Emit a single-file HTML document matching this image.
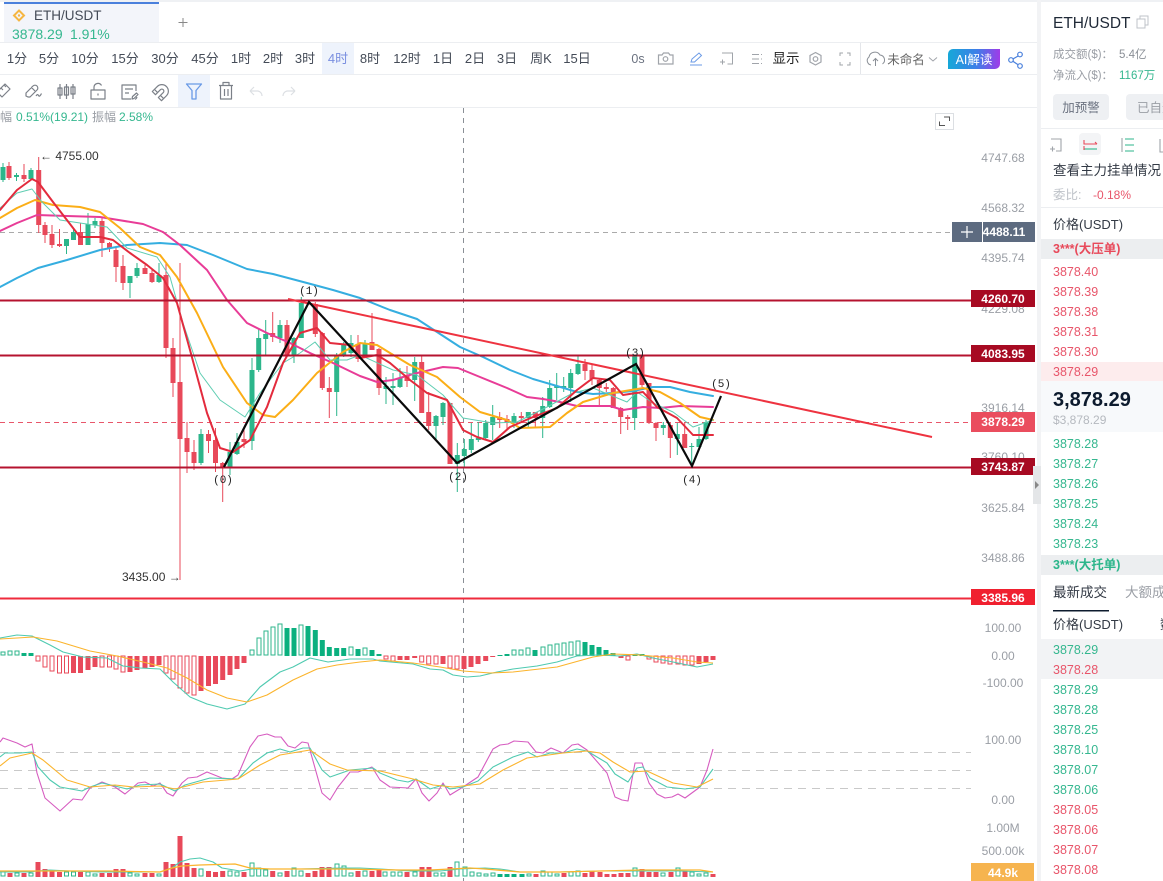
<!DOCTYPE html>
<html><head><meta charset="utf-8"><title>ETH/USDT</title>
<style>
html,body{margin:0;padding:0;background:#fff;width:1163px;height:881px;overflow:hidden}
svg{display:block}
text{font-family:"Liberation Sans","Noto Sans CJK SC",sans-serif}
.ax{font-size:12px;fill:#9a9ea5;text-anchor:middle}
.tb{font-size:13px;fill:#444b57;text-anchor:middle}
.tag{font-size:12px;fill:#fff;text-anchor:middle;font-weight:bold}
.r{font-size:12.5px;fill:#e8556a}
.g{font-size:12.5px;fill:#35b78f}
.wv{font-family:"Liberation Mono",monospace;font-size:11px;fill:#222;text-anchor:middle}
.ic{fill:none;stroke:#7b8088;stroke-width:1.2}
</style></head><body>
<svg width="1163" height="881" viewBox="0 0 1163 881" xmlns="http://www.w3.org/2000/svg">
<rect width="1163" height="881" fill="#fff"/>
<rect width="1163" height="2" fill="#eff1f4"/>
<!-- tab -->
<rect x="4" y="2" width="155" height="41" fill="#f3f5fa"/>
<rect x="4" y="2" width="155" height="2" fill="#4a80dc"/>
<path d="M19 10.500L24 15.500L19 20.500L14 15.500Z" fill="none" stroke="#f5b642" stroke-width="2"/>
<circle cx="19" cy="15.500" r="1.200" fill="#f5b642"/>
<text x="34" y="20" font-size="13.500" fill="#444b57">ETH/USDT</text>
<text x="12" y="39" font-size="14" fill="#35b78f">3878.29</text>
<text x="70" y="39" font-size="14" fill="#35b78f">1.91%</text>
<path d="M183 18v9M178.500 22.500h9" stroke="#888" stroke-width="1"/>
<path d="M0 42.500H1037M0 74.500H1037M0 107.500H1037" stroke="#eceef1" stroke-width="1"/>
<!-- time bar -->
<rect x="322" y="43" width="32" height="31" fill="#eef3fc"/>
<g>
<text class="tb" x="17" y="63">1分</text><text class="tb" x="49" y="63">5分</text><text class="tb" x="85" y="63">10分</text><text class="tb" x="125" y="63">15分</text><text class="tb" x="165" y="63">30分</text><text class="tb" x="205" y="63">45分</text><text class="tb" x="241" y="63">1时</text><text class="tb" x="273" y="63">2时</text><text class="tb" x="305" y="63">3时</text><text class="tb" x="338" y="63" style="fill:#7a8fe0">4时</text><text class="tb" x="370" y="63">8时</text><text class="tb" x="407" y="63">12时</text><text class="tb" x="443" y="63">1日</text><text class="tb" x="475" y="63">2日</text><text class="tb" x="507" y="63">3日</text><text class="tb" x="541" y="63">周K</text><text class="tb" x="577" y="63">15日</text>
<text class="tb" x="638" y="63" style="fill:#6b7280;font-size:12.500px">0s</text>
<text class="tb" x="786" y="63" style="fill:#222;font-size:13.500px">显示</text>
<text class="tb" x="906" y="64" style="fill:#666;font-size:12.500px">未命名</text>
</g>
<!-- top right icons -->
<g class="ic" stroke-width="1">
<path d="M658.500 55h3.500l1.500-2h5l1.500 2h3v9h-14.500z" stroke="#a0a4aa"/><circle cx="665.500" cy="59" r="2.300" stroke="#a0a4aa"/>
<path d="M691 62l1-3 7-6 2.500 2.500-7 6.500zM690 65h12" stroke="#6a9ae6" stroke-width="1"/>
<path d="M722 53h10.500v11h-5M725 62h-5M722.500 59.500v5" stroke="#a0a4aa" stroke-width="1"/>
<path d="M752 54.500h7M752 59h7M752 63.500h7M761 54.500h1M761 59h1M761 63.500h1" stroke="#a0a4aa" stroke-width="1"/>
<path d="M815.500 52.500l5.500 3v6.500l-5.500 3-5.500-3v-6.500z" stroke="#a0a4aa"/><circle cx="815.500" cy="59" r="2.300" stroke="#a0a4aa"/>
<path d="M840 56v-3h3M847 53h3v3M850 62v3h-3M843 65h-3v-3" stroke="#a0a4aa" stroke-width="1"/>
<path d="M871 65a4.500 4.500 0 0 1-2-8 6 6 0 0 1 11-2 5 5 0 0 1 2.500 9M875.500 66v-7M873 61l2.500-2.500 2.500 2.500" stroke="#8a8f96" stroke-width="1"/>
<path d="M929 57.500l4 3.500 4-3.500" stroke="#a0a4aa" stroke-width="1"/>
<path d="M1011 60l9-5M1011 60l9 6" stroke="#4a80dc"/><circle cx="1011" cy="60" r="2.300" stroke="#4a80dc" fill="#fff"/><circle cx="1020" cy="54.500" r="2.300" stroke="#4a80dc" fill="#fff"/><circle cx="1020" cy="66" r="2.300" stroke="#4a80dc" fill="#fff"/>
</g>
<path d="M860.500 43V74" stroke="#e4e6ea"/>
<defs><linearGradient id="ai" x1="0" x2="1"><stop offset="0" stop-color="#16a8d8"/><stop offset=".55" stop-color="#3d7fe8"/><stop offset="1" stop-color="#a03be8"/></linearGradient></defs>
<path d="M953 49h47v15a5 5 0 0 1-5 5h-47v-15a5 5 0 0 1 5-5z" fill="url(#ai)"/>
<text x="974" y="64" font-size="12.500" fill="#fff" text-anchor="middle">AI解读</text>
<!-- drawing tools -->
<rect x="178" y="75" width="32" height="32" fill="#eef3fc"/>
<g class="ic" stroke-linejoin="round">
<path d="M-3 92l8-8 5 5-8 8zM1 88l2 2M4 85l2 2" />
<path d="M28 97l-2-1 0-3 7-7a2.500 2.500 0 0 1 4 4l-7 7zM31 87l4 4M36 96q1.500-2.500 2.500-.5t3-2"/>
<path d="M60 84v15M66.500 84v15M73 84v15M58 88h4v7h-4zM64.500 87h4v8h-4zM71 87h4v7h-4z"/>
<path d="M91 90h14v9h-14zM94 90v-3a4 4 0 0 1 7.500-1.500M98 93.500v2"/>
<path d="M131 99h-9v-14h14v6M125 89h8M125 93h4M132 99l.5-2.500 4-3.500 1.500 1.500-4 4zM137 97q-1 2.500-2 2"/>
<g transform="rotate(45 161.500 91.500)"><path d="M155 98v-7a6.500 6.500 0 0 1 13 0v7h-4.500v-7a2 2 0 0 0-4 0v7zM155 95h4.500M163.500 95h4.500"/></g>
<path d="M186.500 84h15l-5.500 6.500v8.500h-4v-8.500z" stroke="#6a9ae6" stroke-width="1.300"/>
<path d="M219 85.500h14M223 85.500v-3h6v3M220.500 85.500v13.500h11v-13.500M224.500 89v7M228 89v7"/>
<path d="M250 91h8a5 5 0 0 1 4 5M250 91l4-4M250 91l4 4" stroke="#dcdfe3"/>
<path d="M295 91h-8a5 5 0 0 0-4 5M295 91l-4-4M295 91l-4 4" stroke="#dcdfe3"/>
</g>
<!-- stats -->
<text x="0" y="121" font-size="12" fill="#9a9ea5">幅</text>
<text x="16" y="121" font-size="12" fill="#35b78f">0.51%(19.21)</text>
<text x="92" y="121" font-size="12" fill="#9a9ea5">振幅</text>
<text x="119" y="121" font-size="12" fill="#35b78f">2.58%</text>
<!-- expand button -->
<rect x="935.500" y="113.500" width="18" height="16" fill="#fff" stroke="#dcdfe3"/>
<path d="M944 117h5.500v4M945 125.500h-5.500v-4" fill="none" stroke="#555"/>
<!-- dashed -->
<path d="M463.500 108V881" stroke="#8a8f96" stroke-dasharray="5 5"/>
<path d="M0 232.500H952" stroke="#aaa" stroke-dasharray="5 4"/>
<path d="M0 422.500H971" stroke="#e8566a" stroke-dasharray="5 4"/>
<!-- candles wicks -->
<path fill="none" stroke="#e8495a" stroke-width="1" d="M9 162V180M24 164V182M38.700 157V233M45 222V243M52 225V248M59.500 229V247M80.500 223V245M102 218V257M109.500 242V252M116 247V282M123 255V290M145 265V274M152 270V283M166 263V358M173 338V397M180 263V580M187 422V473M194 440V470M208.500 430V453M215.500 428V472M222.700 462V502M244 428V448M272.700 312V342M287 320V357M315.300 302V337M322.300 332V390M329.300 377V418M358 335V362M372 313V350M379 348V395M407 366V387M421.700 355V413M428.700 392V430M450 403V464M499.700 412V428M507 415V430M521.300 412V423M535.300 412V427M585 359V380M592 365V385M599.300 378V406M606.300 383V392M613.300 387V408M620.700 407V434M627.700 415V430M642 355V387M649 383V424M656 422V441M670.300 423V458M684.700 423V448"/>
<path fill="none" stroke="#2cb68b" stroke-width="1" d="M3 163V182M16.500 173V181M31 168V180M66.500 239V254M73.500 228V240M88 213V245M95 218V228M130 276V298M137 263V278M159 263V283M201 429V465M230 442V475M237 433V455M252 358V450M258.700 328V372M265.700 320V355M280 320V343M294 337V363M301.300 297V338M336.700 353V416M343.700 342V357M351 335V357M365 340V358M386 377V404M393 373V405M400 368V388M414.700 357V401M436 415V439M443 402V425M457.300 443V492M464.300 439V467M471.300 423V453M478.300 422V442M485.700 420V440M492.700 405V440M514 413V428M528.300 412V428M542.700 397V438M549.700 380V408M556.700 373V400M563.700 377V392M570.700 369V402M578 355V375M634.700 355V430M663.300 422V435M677.300 423V455M691.700 443V468M699 427V447M706 420V440"/>
<!-- bodies -->
<path fill="none" stroke="#e8495a" stroke-width="5" d="M9 166V178M24 175V179M38.700 170V225M45 225V235M52 234V245M59.500 244V246M80.500 232V245M102 221V243M109.500 243V248M116 250V267M123 266V283M145 268V274M152 273V282M166 275V348M173 348V383M180 382V439M187 438V452M194 452V463M208.500 434V441M215.500 440V463M222.700 463V467M244 439V442M272.700 333V337M287 325V355M315.300 304V334M322.300 333V388M329.300 388V392M358 344V359M372 342V350M379 349V388M407 376V381M421.700 362V413M428.700 412V426M450 403V464M499.700 417V420M507 419V422M521.300 416V418M535.300 412V418M585 364V371M592 370V379M599.300 380V388M606.300 387V389M613.300 388V408M620.700 408V417M627.700 417V419M642 356V385M649 383V423M656 423V428M670.300 425V438M684.700 434V448"/>
<path fill="none" stroke="#2cb68b" stroke-width="5" d="M3 167V180M16.500 175V177M31 170V179M66.500 239V246M73.500 232V240M88 224V245M95 221V225M130 276V283M137 268V276M159 275V282M201 434V463M230 452V467M237 442V454M252 370V441M258.700 338V370M265.700 334V339M280 325V338M294 338V356M301.300 303V338M336.700 355V392M343.700 344V355M351 343V353M365 343V355M386 386V389M393 386V388M400 378V387M414.700 362V380M436 416V426M443 403V417M457.300 455V464M464.300 449V456M471.300 439V450M478.300 438V440M485.700 423V438M492.700 417V425M514 416V423M528.300 412V418M542.700 406V418M549.700 388V407M556.700 386V388M563.700 386V388M570.700 373V388M578 364V374M634.700 356V418M663.300 425V428M677.300 434V439M691.700 446V447M699 439V447M706 422V439"/>
<!-- MAs -->
<g fill="none" stroke-linejoin="round" stroke-linecap="round">
<polyline stroke="#35aee0" stroke-width="2" points="0,287 17,278 38,268 67,260 100,250 127,245 160,243 187,245 213,255 247,269 273,274 307,283 333,290 360,298 390,310 417,319 437,332 460,347 483,357 510,370 533,379 557,386 577,392 593,394 613,393 633,391 653,387 670,387 690,392 713,396"/>
<polyline stroke="#e83c97" stroke-width="2" points="0,231 17,223 37,215 67,216 100,217 143,224 163,232 180,245 207,270 227,300 247,323 267,333 290,343 310,353 333,363 360,376 377,382 393,380 413,374 443,367 458,368 480,377 507,388 527,397 543,399 560,402 577,406 610,406 623,410 643,407 660,408 680,406 713,407"/>
<polyline stroke="#fbae17" stroke-width="2" points="0,218 17,208 35,200 53,205 80,207 100,212 120,228 140,247 160,255 177,277 197,313 223,367 247,403 263,415 275,417 293,400 317,373 343,352 360,343 377,345 390,353 410,365 437,377 460,397 480,412 507,420 520,428 550,427 567,413 583,402 613,393 643,388 660,392 680,403 700,417 713,420"/>
<polyline stroke="#5fcdb2" stroke-width="1" points="0,208 17,193 32,189 42,202 60,220 80,223 107,227 127,248 157,257 170,277 183,323 200,373 220,400 245,417 260,393 283,363 300,353 315,342 330,360 347,360 360,355 393,370 417,375 443,395 463,418 493,423 517,422 547,407 573,393 593,388 627,402 637,392 653,403 673,412 693,427 713,420"/>
<polyline stroke="#e32b3d" stroke-width="2" points="0,210 17,190 32,179 38,182 53,202 80,237 100,237 113,240 130,253 147,265 163,278 177,303 190,350 207,413 220,448 233,452 250,440 267,407 283,363 300,333 317,328 330,343 350,345 360,358 377,355 390,363 410,380 427,393 447,400 463,430 477,437 493,442 510,427 533,417 557,408 577,390 593,378 610,380 623,395 643,392 657,407 677,418 693,435 713,435"/>
</g>
<!-- horizontal levels -->
<path d="M0 300.500H971M0 355.500H971M0 467.500H971" stroke="#b5132f" stroke-width="2"/>
<path d="M0 598.500H971" stroke="#ef2b3c" stroke-width="2"/>
<path d="M288 299L932 437" stroke="#ee3340" stroke-width="2"/>
<polyline fill="none" stroke="#0a0a0a" stroke-width="2.200" stroke-linejoin="miter" points="224,467 309,302 457,463 636,364 692,466 721,396"/>
<text class="wv" x="223" y="483">(0)</text><text class="wv" x="309" y="294">(1)</text><text class="wv" x="458" y="480">(2)</text><text class="wv" x="635" y="356">(3)</text><text class="wv" x="692" y="483">(4)</text><text class="wv" x="721" y="387">(5)</text>
<text x="40" y="160" font-size="12" fill="#333">← 4755.00</text>
<text x="122" y="581" font-size="12" fill="#333">3435.00 →</text>
<!-- MACD -->
<path fill="#fff" stroke="#2cb68b" stroke-width="1" d="M1 655v-3h4v3zM8 655v-4h4v4zM15 655v-4h4v4zM250 655v-5h4v5zM257 655v-17h4v17zM264 655v-24h4v24zM271 655v-28h4v28zM278 655v-31h4v31zM299 655v-30h4v30zM349 655v-8h4v8zM363 655v-7h4v7zM512 655v-5h4v5zM519 655v-5h4v5zM526 655v-7h4v7zM541 655v-8h4v8zM548 655v-10h4v10zM555 655v-11h4v11zM562 655v-12h4v12zM569 655v-13h4v13zM576 655v-14h4v14z"/>
<path fill="none" stroke="#0bb07f" stroke-width="5" d="M24 656V653M31 656V653M287 656V628M294 656V628M308 656V626M315.300 656V630M322.300 656V640M329.300 656V647M336.700 656V648M343.700 656V648M358 656V649M372 656V650M379 656V654M500 656V655M507 656V654M535 656V650M585 656V642M592 656V645M599 656V647M606 656V650M613 656V653M635 656V654M642 656V654"/>
<path fill="#fff" stroke="#e8495a" stroke-width="1" d="M36 656v5h4v-5zM43 656v11h4v-11zM50 656v15h4v-15zM57.500 656v17h4v-17zM64.500 656v17h4v-17zM100 656v11h4v-11zM107.500 656v11h4v-11zM114 656v13h4v-13zM121 656v16h4v-16zM164 656v17h4v-17zM171 656v23h4v-23zM178 656v32h4v-32zM185 656v37h4v-37zM192 656v39h4v-39zM384 656v3h4v-3zM391 656v5h4v-5zM419.700 656v6h4v-6zM426.700 656v8h4v-8zM434 656v8h4v-8zM448 656v12h4v-12zM455 656v13h4v-13zM626 656v4h4v-4zM647 656v3h4v-3zM654 656v6h4v-6zM661 656v7h4v-7zM668 656v8h4v-8zM676 656v8h4v-8zM683 656v9h4v-9zM690 656v9h4v-9z"/>
<path fill="none" stroke="#e8495a" stroke-width="5" d="M73.500 656V673M80.500 656V673M88 656V670M95 656V667M130 656V672M137 656V670M145 656V668M152 656V667M159 656V665M201 656V691M208.500 656V686M215.500 656V684M222.700 656V680M230 656V675M237 656V669M244 656V663M400 656V660M407 656V660M414.700 656V658M443 656V664M464 656V669M471 656V667M478 656V664M485.700 656V661M492.700 656V657M621 656V658M699 656V664M706 656V662M713 656V660"/>
<g fill="none" stroke-linejoin="round" stroke-width="1.100">
<polyline stroke="#4fcab0" points="0,638 17,635 32,636 50,645 63,652 83,657 107,658 123,666 140,668 160,669 173,682 190,697 207,704 227,709 245,704 260,687 280,672 293,667 310,658 328,662 350,659 373,659 380,661 413,664 430,669 443,670 453,675 467,677 480,676 497,672 513,669 537,666 557,662 577,656 597,655 620,656 637,654 653,658 673,662 697,667 713,664"/>
<polyline stroke="#fbb42c" points="0,639 17,638 33,637 57,641 90,651 117,656 143,662 167,668 187,678 207,690 227,698 247,702 267,695 293,680 317,669 337,665 360,662 380,660 413,663 440,667 463,671 490,673 513,672 557,667 593,657 613,654 640,655 673,658 697,662 713,663"/>
</g>
<!-- KDJ -->
<path d="M0 752.500H971M0 770.500H971M0 788.500H971" stroke="#c9c9c9" stroke-dasharray="8 6"/>
<g fill="none" stroke-linejoin="round" stroke-width="1.100">
<polyline stroke="#d65cc0" points="0,742 3,738 17,743 25,747 32,744 37,773 45,798 60,811 73,799 82,800 90,788 102,782 115,787 125,794 138,783 145,782 153,786 160,783 167,793 173,796 182,783 188,778 197,777 207,772 222,778 232,779 238,775 250,747 258,736 267,734 275,737 281,737 288,746 295,748 302,742 308,743 322,793 330,800 338,787 350,772 358,772 372,767 380,780 390,787 408,788 416,779 422,793 429,801 437,793 443,783 450,795 463,787 478,777 493,749 500,745 508,744 514,741 528,742 536,752 543,753 551,748 563,753 572,745 578,744 587,750 607,773 615,797 622,800 628,801 635,763 642,763 649,783 657,794 665,798 672,797 678,794 685,798 700,787 707,770 713,749"/>
<polyline stroke="#4fcab0" points="0,757 5,753 20,753 32,752 38,767 50,780 60,787 82,791 90,787 102,783 115,786 127,789 140,785 160,784 175,791 185,785 210,778 238,779 253,763 267,753 280,749 290,752 303,748 310,748 322,770 330,777 350,770 373,768 380,773 397,780 408,782 416,779 430,789 443,785 450,789 463,787 478,781 493,767 513,757 528,752 537,757 550,753 563,753 577,749 587,751 607,763 615,774 628,782 637,768 643,767 650,778 667,787 685,789 700,787 713,769"/>
<polyline stroke="#fbb42c" points="0,766 10,758 32,753 43,760 67,780 90,787 115,785 133,787 160,786 175,789 203,782 238,779 260,765 280,755 310,750 330,764 347,770 380,771 413,779 433,785 453,787 480,784 503,770 527,758 563,753 587,751 600,753 613,762 630,772 647,771 673,783 697,787 713,779"/>
</g>
<!-- Volume -->
<path fill="#fff" stroke="#2cb68b" stroke-width="1" d="M1 876v-4h4v4zM15 876v-3h4v3zM29 876v-3h4v3zM64.500 876v-4h4v4zM71.500 876v-4h4v4zM86 876v-4h4v4zM93 876v-2h4v2zM128 876v-3h4v3zM135 876v-2h4v2zM157 876v-2h4v2zM199 876v-7h4v7zM228 876v-5h4v5zM235 876v-4h4v4zM250 876v-13h4v13zM256.700 876v-8h4v8zM263.700 876v-6h4v6zM278 876v-3h4v3zM292 876v-8h4v8zM299 876v-5h4v5zM335 876v-12h4v12zM342 876v-10h4v10zM349 876v-3h4v3zM363 876v-5h4v5zM383 876v-4h4v4zM391 876v-4h4v4zM398 876v-4h4v4zM413 876v-4h4v4zM434 876v-3h4v3zM441 876v-3h4v3zM455 876v-14h4v14zM463 876v-9h4v9zM470 876v-4h4v4zM477 876v-3h4v3zM484 876v-2h4v2zM491 876v-3h4v3zM527 876v-2h4v2zM541 876v-5h4v5zM548 876v-4h4v4zM555 876v-2h4v2zM569 876v-4h4v4zM576 876v-5h4v5zM633 876v-8h4v8zM661 876v-3h4v3zM676 876v-8h4v8zM690 876v-4h4v4zM697 876v-2h4v2zM704 876v-3h4v3z"/>
<path fill="none" stroke="#e8495a" stroke-width="5" d="M10 877V873M24 877V873M38 877V862M45 877V869M52 877V871M59.500 877V872M80.500 877V872M102 877V873M109.500 877V873M116 877V869M123 877V869M145 877V873M152 877V873M166 877V862M173 877V864M180 877V836M187 877V863M194 877V868M208.500 877V871M215.500 877V872M222.700 877V871M244 877V872M272.700 877V871M287 877V871M308 877V873M315 877V871M322 877V867M329 877V867M358 877V871M372 877V871M379 877V869M407 877V872M422 877V867M429 877V867M450 877V867M536 877V874M564 877V873M585 877V873M592 877V871M600 877V872M607 877V874M614 877V874M621 877V873M628 877V873M642 877V869M649 877V872M656 877V872M671 877V872M685 877V871M713 877V874"/>
<path fill="none" stroke="#0bb07f" stroke-width="5" d="M500 877V874M507 877V874M514 877V874M522 877V874"/>
<g fill="none" stroke-linejoin="round" stroke-width="1.100">
<polyline stroke="#4fcab0" points="0,872 30,872 37,871 50,870 70,871 100,872 160,872 172,868 180,862 190,859 200,858 213,862 222,868 240,871 252,869 270,869 300,869 340,868 360,868 380,869 410,871 440,871 460,869 485,868 500,869 520,872 560,872 600,871 640,871 680,871 713,872"/>
<polyline stroke="#fbb42c" stroke-width="1.300" points="0,871 60,871 110,871 160,872 172,868 182,866 200,865 235,864 250,868 270,869 340,869 400,870 430,870 470,868 485,869 520,872 560,872 640,870 700,870 713,872"/>
</g>
<!-- axis -->
<text class="ax" x="1003" y="162">4747.68</text><text class="ax" x="1003" y="212">4568.32</text><text class="ax" x="1003" y="262">4395.74</text><text class="ax" x="1003" y="313">4229.08</text><text class="ax" x="1003" y="412">3916.14</text><text class="ax" x="1003" y="461">3760.10</text><text class="ax" x="1003" y="512">3625.84</text><text class="ax" x="1003" y="562">3488.86</text><text class="ax" x="1003" y="632">100.00</text><text class="ax" x="1003" y="660">0.00</text><text class="ax" x="1003" y="687">-100.00</text><text class="ax" x="1003" y="744">100.00</text><text class="ax" x="1003" y="804">0.00</text><text class="ax" x="1003" y="832">1.00M</text><text class="ax" x="1003" y="855">500.00k</text>
<!-- tags -->
<rect x="952" y="222" width="30" height="20" fill="#5d6b80"/><path d="M967 226v12M961 232h12" stroke="#fff" stroke-width="1.200"/>
<rect x="983" y="222" width="52" height="20" fill="#5d6b80"/><text class="tag" x="1004" y="236">4488.11</text>
<rect x="971" y="290" width="64" height="17" fill="#a70a22"/><text class="tag" x="1003" y="303">4260.70</text>
<rect x="971" y="345" width="64" height="17" fill="#a70a22"/><text class="tag" x="1003" y="358">4083.95</text>
<rect x="971" y="412" width="64" height="20" fill="#ea4d5e"/><text class="tag" x="1003" y="426">3878.29</text>
<rect x="971" y="458" width="64" height="17" fill="#a70a22"/><text class="tag" x="1003" y="471">3743.87</text>
<rect x="971" y="589" width="64" height="16" fill="#f0202f"/><text class="tag" x="1003" y="602">3385.96</text>
<rect x="971" y="863" width="63" height="18" fill="#f6b44f"/><text class="tag" x="1003" y="877">44.9k</text>
<!-- right panel -->
<rect x="1037" y="0" width="4" height="881" fill="#f2f3f5"/>
<rect x="1033" y="466" width="8" height="38" fill="#e4e6e8"/><path d="M1035 481l4 4-4 4z" fill="#888"/>
<rect x="1041" y="2" width="122" height="879" fill="#fff"/>
<text x="1053" y="28" font-size="15.500" fill="#1f2937">ETH/USDT</text>
<path d="M1140 19v-3h8v9h-3M1137 19h8v9h-8z" fill="none" stroke="#bfc3c9"/>
<text x="1053" y="58" font-size="11.500" fill="#9a9ea5">成交额($)：</text><text x="1119" y="58" font-size="11.500" fill="#8a8f96">5.4亿</text>
<text x="1053" y="79" font-size="11.500" fill="#9a9ea5">净流入($)：</text><text x="1119" y="79" font-size="11.500" fill="#35b78f">1167万</text>
<rect x="1053" y="94" width="56" height="26" rx="4" fill="#eef0f3"/><text x="1081" y="112" font-size="12.500" fill="#6b7280" text-anchor="middle">加预警</text>
<rect x="1126" y="94" width="60" height="26" rx="4" fill="#eef0f3"/><text x="1137" y="112" font-size="12.500" fill="#9a9ea5">已自选</text>
<path d="M1041 128.500H1163M1041 207.500H1163" stroke="#eceef1"/>
<rect x="1079" y="133" width="22" height="22" rx="4" fill="#f3f4f6"/>
<g fill="none" stroke-width="1.100">
<path d="M1051 139h10v12h-5M1055 149h-5M1052.500 146.500v5" stroke="#a0a4aa"/>
<path d="M1084 140v4h13M1097 144l-2-2" stroke="#e8495a"/><path d="M1084 149h13" stroke="#2cb68b"/><path d="M1084 146v4" stroke="#e8495a"/>
<path d="M1125 139h9M1125 145h9M1125 151h9" stroke="#2cb68b"/><path d="M1122 138v14" stroke="#a0a4aa"/>
<path d="M1160 139v13h5" stroke="#a0a4aa"/>
</g>
<text x="1053" y="175" font-size="13.500" fill="#333a45">查看主力挂单情况</text>
<text x="1053" y="199" font-size="12.500" fill="#bfc3c9">委比:</text><text x="1093" y="199" font-size="12" fill="#e8556a">-0.18%</text>
<text x="1053" y="229" font-size="13" fill="#333a45">价格(USDT)</text>
<rect x="1041" y="239" width="122" height="20" fill="#eceef0"/><text x="1053" y="253" font-size="12.500" fill="#e8495a" font-weight="bold">3***(大压单)</text>
<rect x="1041" y="362" width="122" height="19" fill="#fdeced"/>
<text class="r" x="1053" y="276">3878.40</text><text class="r" x="1053" y="296">3878.39</text><text class="r" x="1053" y="316">3878.38</text><text class="r" x="1053" y="336">3878.31</text><text class="r" x="1053" y="356">3878.30</text><text class="r" x="1053" y="376">3878.29</text>
<rect x="1041" y="381" width="122" height="51" fill="#f7f9fb"/>
<text x="1053" y="406" font-size="20" font-weight="bold" fill="#0d1b2e">3,878.29</text>
<text x="1053" y="424" font-size="12" fill="#b5b9bf">$3,878.29</text>
<text class="g" x="1053" y="448">3878.28</text><text class="g" x="1053" y="468">3878.27</text><text class="g" x="1053" y="488">3878.26</text><text class="g" x="1053" y="508">3878.25</text><text class="g" x="1053" y="528">3878.24</text><text class="g" x="1053" y="548">3878.23</text>
<rect x="1041" y="555" width="122" height="20" fill="#eceef0"/><text x="1053" y="569" font-size="12.500" fill="#2cb68b" font-weight="bold">3***(大托单)</text>
<text x="1053" y="597" font-size="13.500" fill="#333a45">最新成交</text><text x="1125" y="597" font-size="13.500" fill="#9a9ea5">大额成交</text>
<rect x="1053" y="610" width="56" height="1.500" fill="#0d1b2e"/>
<text x="1053" y="629" font-size="13" fill="#333a45">价格(USDT)</text><text x="1160" y="629" font-size="13" fill="#333a45">数量</text>
<rect x="1041" y="639" width="122" height="40" fill="#f2f3f5"/>
<text class="g" x="1053" y="654">3878.29</text><text class="r" x="1053" y="674">3878.28</text><text class="g" x="1053" y="694">3878.29</text><text class="g" x="1053" y="714">3878.28</text><text class="g" x="1053" y="734">3878.25</text><text class="g" x="1053" y="754">3878.10</text><text class="g" x="1053" y="774">3878.07</text><text class="g" x="1053" y="794">3878.06</text><text class="r" x="1053" y="814">3878.05</text><text class="r" x="1053" y="834">3878.06</text><text class="r" x="1053" y="854">3878.07</text><text class="r" x="1053" y="874">3878.08</text>
</svg>
</body></html>
